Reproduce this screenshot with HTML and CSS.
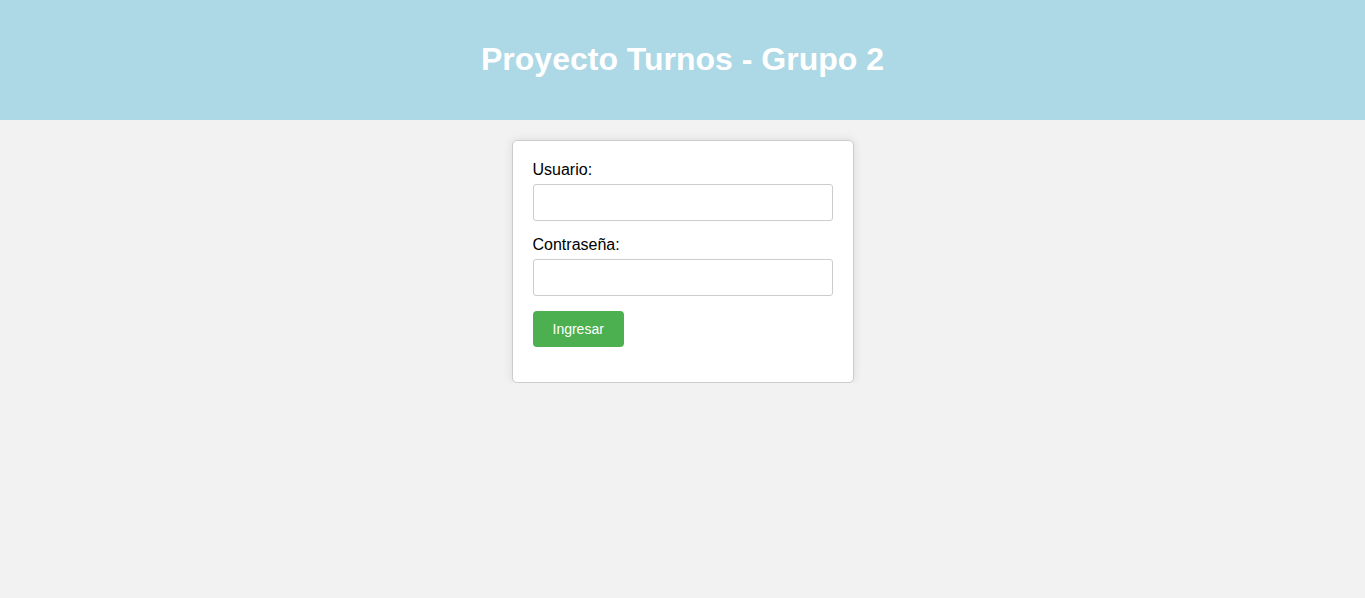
FILE: index.html
```html
<!DOCTYPE html>
<html lang="es">
<head>
<meta charset="utf-8">
<title>Proyecto Turnos - Grupo 2</title>
<link rel="stylesheet" href="styles.css">
</head>
<body>
<header class="header">
  <h1 class="title">Proyecto Turnos - Grupo 2</h1>
</header>
<main class="main">
  <form class="card">
    <label class="label" for="usuario">Usuario:</label>
    <input class="input" id="usuario" type="text">
    <label class="label" for="clave">Contraseña:</label>
    <input class="input" id="clave" type="password">
    <button class="btn" type="button">Ingresar</button>
  </form>
</main>
</body>
</html>
```
FILE: styles.css
```css
html, body {
  margin: 0;
  padding: 0;
}
body {
  background: #f2f2f2;
  font-family: "Liberation Sans", Arial, sans-serif;
  color: #000;
}
.header {
  background: #add8e6;
  padding: 20px;
  text-align: center;
}
.title {
  margin: 21.44px 0;
  font-size: 32px;
  line-height: 37px;
  font-weight: bold;
  color: #fff;
}
.main {
  display: flex;
  justify-content: center;
  padding-top: 20px;
}
.card {
  width: 300px;
  background: #fff;
  border: 1px solid #ccc;
  border-radius: 5px;
  box-shadow: 0 0 10px rgba(0,0,0,0.1);
  padding: 20px 20px 35px;
  display: flex;
  flex-direction: column;
  align-items: flex-start;
}
.label {
  font-size: 16px;
  line-height: 18px;
  margin-bottom: 5px;
}
.input {
  box-sizing: border-box;
  width: 100%;
  height: 37px;
  padding: 8px;
  border: 1px solid #ccc;
  border-radius: 3px;
  margin: 0 0 15px;
  font-size: 16px;
  font-family: inherit;
}
.btn {
  background: #4caf50;
  color: #fff;
  border: none;
  border-radius: 4px;
  padding: 10px 20px;
  height: 36px;
  font-size: 14px;
  line-height: 16px;
  font-family: inherit;
  cursor: pointer;
}
```
